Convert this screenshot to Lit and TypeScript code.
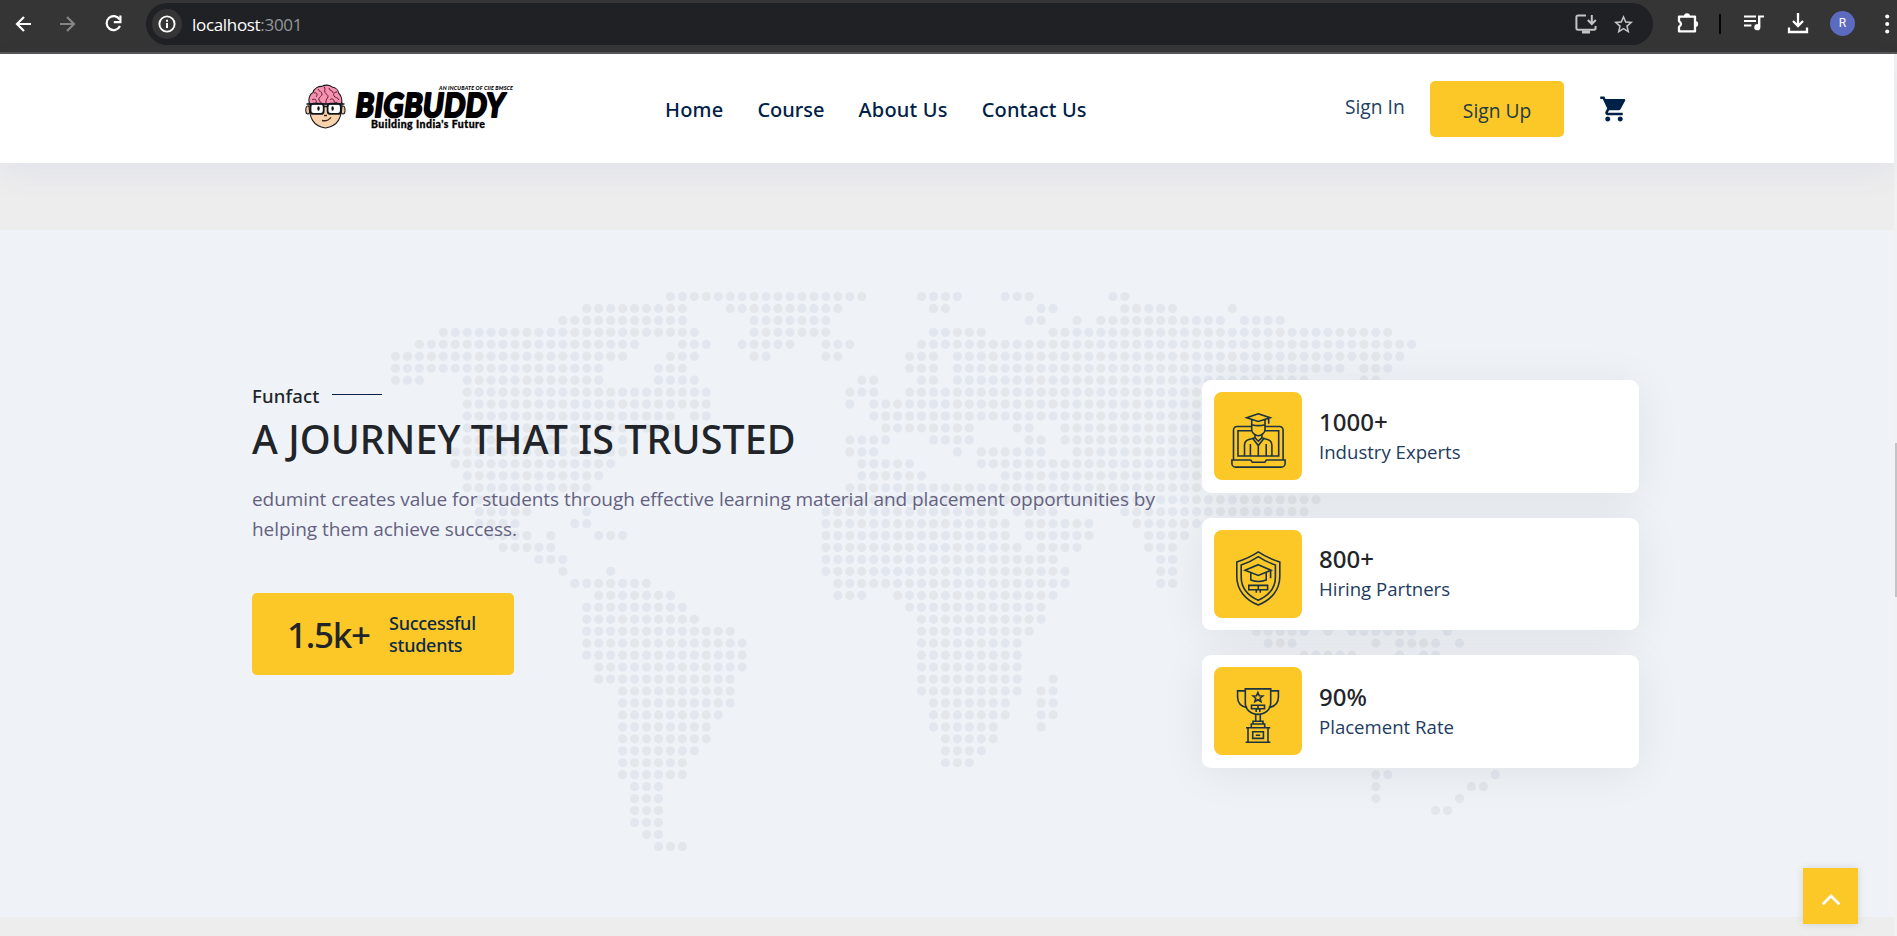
import { LitElement, html, svg, css } from "lit";
import { customElement } from "lit/decorators.js";

/* Column ranges of land dots, one entry per map row. */
const MAP_ROWS: string[] = [
  "23-39 44-47 51-53 60-61",
  "16-24 28-37 45-46 54-55 61-65 70",
  "14-24 30-36 53-54 57 59-69 71-74",
  "4-25 30-36 45-49 55-83",
  "2-20 24-26 29-33 36-38 44-85",
  "0-19 23-25 30-31 36-37 43-45 47-84",
  "0-17 22-24 43-45 47-79 81-83",
  "0-2 6-17 22-25 39-40 44-45 47-76 81-82",
  "6-26 38-40 43-76",
  "6-26 38 40-76",
  "6-23 25-26 40-76",
  "6-23 41-48 52-53 56-76",
  "6-16 19 38-41 45-48 53-54 56-76",
  "5-19 38-40 47 49-54 57-76",
  "5-18 39-43 49-77",
  "6-17 39-44 51-77",
  "6-16 38-77",
  "7-10 37-77",
  "7-11 16 36-50 52-55 61-76",
  "7-10 15-16 36-51 53-58 62-74",
  "8-11 13 17-19 36-51 53-58 63-66",
  "9-13 36-52 54-57 63-65",
  "12-14 36-55 64-65",
  "14 18 36-56 64-65",
  "15-21 37-56 64-65",
  "17-23 37-39 42-55",
  "16-24 43-54",
  "16-25 44-54",
  "16-28 44-53 72-76 78 80-85 88",
  "16-29 44-52 73-75 82 84-87 89",
  "16-29 44-52 76-80 84 86-87",
  "17-29 44-52",
  "17-28 44-52 55",
  "19-28 44-52 54-55",
  "19-28 45-51 54-55",
  "19-27 45-51 54-55",
  "19-26 45-50 54",
  "19-26 46-50",
  "19-25 46-49",
  "19-24 46-48 75-76 81-85",
  "19-24 82-83 92",
  "20-22 82 90-91",
  "20-22 82 89",
  "20-22 87-88",
  "20-22",
  "21-22",
  "22-24",
];
const PITCH = 11.955;

@customElement("dot-map")
export class DotMap extends LitElement {
  static styles = css`
    :host { display: block; }
    svg { display: block; }
    .a { fill: #e2e6ef; }
    .b { fill: #e3e7eb; }
  `;
  render() {
    const dots = MAP_ROWS.flatMap((row, r) =>
      row.split(" ").flatMap((range) => {
        const [from, to = from] = range.split("-").map(Number);
        return Array.from({ length: to - from + 1 }, (_, i) => {
          const c = from + i;
          const tone = (r * 7 + c * 5 + ((r * c) % 5)) % 9 < 4 ? "a" : "b";
          return svg`<circle class=${tone} cx=${(5.5 + c * PITCH).toFixed(2)} cy=${(5.5 + r * PITCH).toFixed(2)} r="4.6"/>`;
        });
      })
    );
    return html`<svg width="1120" height="562" aria-hidden="true">${dots}</svg>`;
  }
}

@customElement("browser-bar")
export class BrowserBar extends LitElement {
  static styles = css`
    :host { display: flex; align-items: flex-start; height: 52px; background: #353535; border-bottom: 2px solid #565656; }
    svg { display: block; flex: none; }
    .back { margin: 14px 0 0 13px; }
    .fwd { margin: 14px 0 0 24px; }
    .reload { margin: 13px 0 0 25px; }
    .omni { display: flex; align-items: center; width: 1507px; height: 42px; margin: 3px 0 0 22px; border-radius: 21px; background: #202124; }
    .info { display: grid; place-items: center; width: 30px; height: 30px; margin-left: 6px; border-radius: 50%; background: #353535; }
    .url { margin-left: 10px; padding-top: 2px; font: 400 17px/24px "Open Sans", sans-serif; letter-spacing: -0.32px; color: #fff; }
    .url span { color: #93979b; }
    .install { margin: 0 14px 0 auto; }
    .star { margin-right: 18px; }
    .ext { margin: 12px 0 0 23px; }
    .sep { width: 2px; height: 20px; margin: 14px 0 0 20px; background: #050505; }
    .music { margin: 12px 0 0 22px; }
    .dl { margin: 12px 0 0 22px; }
    .avatar { width: 25px; height: 25px; margin: 11px 0 0 21px; border-radius: 50%; background: #5c6bc0; color: #fff; text-align: center; font: 12px/25px Roboto, sans-serif; }
    .dots { margin: 14px 0 0 30px; }
  `;
  render() {
    return html`
      <svg class="back" width="20" height="20" viewBox="0 0 20 20" fill="none" stroke="#fff" stroke-width="2.2"><path d="M18 10H4M11 3l-7 7 7 7"/></svg>
      <svg class="fwd" width="20" height="20" viewBox="0 0 20 20" fill="none" stroke="#858585" stroke-width="2.2"><path d="M3 10h14M10 3l7 7-7 7"/></svg>
      <svg class="reload" width="22" height="22" viewBox="0 0 22 22" fill="none" stroke="#fff" stroke-width="2.2"><path d="M17.600 6.400A7 7 0 1 0 18 13"/><path d="M18.400 2.600v6.600h-6.600"/></svg>
      <div class="omni">
        <div class="info">
          <svg width="18" height="18" viewBox="0 0 18 18"><circle cx="9" cy="9" r="7.6" fill="none" stroke="#fff" stroke-width="1.9"/><path d="M8 8h2v5H8zM8 4.800h2v2H8z" fill="#fff"/></svg>
        </div>
        <div class="url">localhost<span>:3001</span></div>
        <svg class="install" width="24" height="22" viewBox="0 0 24 22" fill="none" stroke="#c4c4c4" stroke-width="2"><path d="M12 2.500H4a1.600 1.600 0 0 0-1.600 1.600v11A1.600 1.600 0 0 0 4 16.700h16a1.600 1.600 0 0 0 1.600-1.600V13"/><path d="M8 17.500h8v3H8z" fill="#c4c4c4" stroke="none"/><path d="M17.800 2v8.200M13.800 7l4 4 4-4"/></svg>
        <svg class="star" width="23" height="23" viewBox="0 0 24 24" fill="#c4c4c4"><path d="M22 9.240l-7.190-.62L12 2 9.190 8.630 2 9.240l5.460 4.730L5.820 21 12 17.270 18.180 21l-1.630-7.030L22 9.240zM12 15.400l-3.760 2.270 1-4.280-3.320-2.880 4.380-.38L12 6.100l1.710 4.040 4.380.38-3.320 2.880 1 4.280L12 15.400z"/></svg>
      </div>
      <svg class="ext" width="23" height="23" viewBox="0 0 23 23"><path d="M3 4.600h16v14.800H3v-4.600a3 3 0 0 0 0-5.600z" fill="none" stroke="#fff" stroke-width="2.3" stroke-linejoin="round"/><path d="M8 4.200a3 3 0 0 1 6 0zM19.200 9a3 3 0 0 1 0 6z" fill="#fff"/></svg>
      <div class="sep"></div>
      <svg class="music" width="22" height="22" viewBox="0 0 22 22" fill="#fff"><path d="M1 3.400h12v2.100H1zM1 7.900h12V10H1zM1 12.400h7.400v2.100H1z"/><path d="M15 3.400h6v2.200h-3.600v9.600a3.100 3.100 0 1 1-2.400-3z"/></svg>
      <svg class="dl" width="22" height="22" viewBox="0 0 22 22" fill="none" stroke="#fff" stroke-width="2.3"><path d="M11 1v12.600M6 9l5 5 5-5M2 15.400V20h18v-4.600"/></svg>
      <div class="avatar">R</div>
      <svg class="dots" width="6" height="20" viewBox="0 0 6 20" fill="#fff"><circle cx="2.2" cy="2.6" r="2"/><circle cx="2.2" cy="10" r="2"/><circle cx="2.2" cy="17.4" r="2"/></svg>
    `;
  }
}

@customElement("brand-logo")
export class BrandLogo extends LitElement {
  static styles = css`
    :host { display: block; }
    svg { display: block; overflow: visible; }
    .name { font: 900 33px Lato, sans-serif; }
    .tag { font: italic 900 5.4px Lato, sans-serif; }
    .motto { font: 900 10.5px Lato, sans-serif; }
  `;
  render() {
    return html`<svg width="212" height="50" viewBox="0 0 212 50">
      <g stroke="#1c1c20" stroke-width="1.1">
        <ellipse cx="2.8" cy="26" rx="2" ry="4" fill="#f3c79b"/><ellipse cx="38" cy="26" rx="2" ry="4" fill="#f3c79b"/>
        <path d="M4 19C4 34 8 42 20.400 44 33 42 37 34 37 19z" fill="#f9d3ab"/>
        <path d="M4.500 20C2.600 15 5 10 8 8.500 9 4 14 2 17 2.400 20 .4 25 .8 27 3c4 .6 6.400 3.500 6.600 6C36.800 12 37.600 17 36.200 20z" fill="#f592b0"/>
        <path d="M9 9c3-1 4 2 2 4M7 16c3-2 5 0 4 3M13 5c1 3 4 2 4 5s-4 3-3 6 3 2 3 4M19 2.500c2 2 0 4 1 6s3 2 3 4-3 3-2 7M24 4c0 3 4 2 4 5M32 8c-3 0-4 2-3 4s4 1 5 4M25 16c1-2 4-1 4 1s2 2 3 1" fill="none" stroke="#5e1a35" stroke-width="1"/>
      </g>
      <rect x="5.500" y="19.700" width="13.200" height="10.200" rx="3" fill="#fff" stroke="#12161f" stroke-width="1.800"/>
      <rect x="22.600" y="19.700" width="13.200" height="10.200" rx="3" fill="#fff" stroke="#12161f" stroke-width="1.800"/>
      <path d="M1.500 20h38M19 22.500h3.500" stroke="#12161f" stroke-width="1.700"/>
      <ellipse cx="13.500" cy="24.500" rx="1.200" ry="2.300" fill="#111"/><ellipse cx="27.600" cy="24.500" rx="1.200" ry="2.300" fill="#111"/>
      <path d="M17 36.500c4 .8 7-.6 9-3.200M19 31.500h3" fill="none" stroke="#3b2418" stroke-width="1.300"/>
      <text class="name" transform="translate(49.500 33) skewX(-7) scale(.84 1)" textLength="177" stroke="#000" stroke-width="2.200" stroke-linejoin="round">BIGBUDDY</text>
      <text class="tag" x="134" y="5.600" textLength="74">AN INCUBATE OF CIIE BMSCE</text>
      <text class="motto" x="66" y="44" textLength="114" stroke="#000" stroke-width=".3">Building India's Future</text>
    </svg>`;
  }
}

const ICONS = {
  expert: svg`
    <path d="M20.500 13.500H6a3.500 3.500 0 0 0-3.500 3.500v30M34 13.500h14.600a3.500 3.500 0 0 1 3.500 3.500v30"/>
    <path d="M20.500 17.700H7V43h40.700V17.700H34"/>
    <path d="M.9 47h18.800l1.600 2.200h12.500L35.400 47h18.700v3.400a3.700 3.700 0 0 1-3.700 3.700H4.600A3.700 3.700 0 0 1 .9 50.400z"/>
    <path d="M27.300.8 39 4.700 27.300 8.400 15.700 4.700zM37.700 5v5.800M20.700 6.500V17c0 2.800 3.600 5.700 6.600 5.700S34 19.800 34 17V6.500M20.700 11.700q6.600 1.800 13.300 0"/>
    <path d="M24 21.500v3.300l3.300 3.400 3.600-3.400v-3.300M24 24.800l-2.200.6 5.500 7.200 5.600-7.200-2-.6M27.300 32.600V43M21.800 25.400l-4 1.200a6 6 0 0 0-4.300 5.600V43M32.900 25.400l3.700 1.200a6 6 0 0 1 4.300 5.600V43M19.400 31v12M35.200 31v12"/>`,
  partner: svg`
    <path d="M27.300.9C34 5.500 41 8.500 48.800 11v14.500C48.800 39 40 49 27.300 54 14.600 49 5.800 39 5.800 25.500V11C13.600 8.500 20.600 5.500 27.300.9z"/>
    <path d="M27.300 5.600C33 9.500 38.500 12 44.400 14v12c0 10.500-6.600 18.600-17.100 23.300C16.800 44.600 10.200 36.500 10.200 26V14C16.100 12 21.600 9.500 27.300 5.600z"/>
    <path d="M27.300 13.700 40 19.200l-12.700 5.200-13.300-5.200zM39.600 19.400v7.800M19.800 22v7q7.500 3 15.400 0v-7"/>
    <path d="M17.800 34.400h18.800v4.300H17.800zM27.300 34.400v4M25.300 41.800v-3h4v3"/>`,
  rate: svg`
    <path d="M14.300.9h25.400V15c0 6.500-5.600 11.400-12.700 11.400S14.300 21.500 14.300 15z"/>
    <path d="M14.300 2.900H6.600V9c0 5.500 3.600 9.600 9.600 10.600M39.700 2.900h7.700V9c0 5.500-3.600 9.600-9.600 10.600"/>
    <path d="m26.900 4.500 1.400 3.200 3.500.3-2.700 2.200.8 3.300-3-1.800-3 1.800.8-3.300L22 8l3.500-.3z"/>
    <path d="M20.500 17.300h13v3.500h-13zM27 17.300v3.500M25.200 24v-3h3.600v3"/>
    <path d="M24.700 26.300V33M29.300 26.300V33M22 36v-2.800h10V36M20.300 39v-3h13.400v3M15 39.700h24.200M17 40v14M37 40v14M14.600 54.300h24.800M21.700 43.800h10.700v6.600H21.700zM24.800 47.200h4.400"/>`,
};

const STATS = [
  { icon: ICONS.expert, value: "1000+", label: "Industry Experts" },
  { icon: ICONS.partner, value: "800+", label: "Hiring Partners" },
  { icon: ICONS.rate, value: "90%", label: "Placement Rate" },
];

@customElement("app-root")
export class AppRoot extends LitElement {
  static styles = css`
    :host { display: block; height: 936px; overflow: hidden; background: #ededed; font-family: "Open Sans", sans-serif; color: #002147; }
    .body { display: flex; height: 882px; }
    .page { width: 1894px; flex: none; }
    .scroll { width: 3px; padding-top: 389px; background: #f1f1f1; box-sizing: border-box; }
    .thumb { height: 154px; margin-left: 1px; background: #c4c4c4; }
    header { position: relative; display: flex; align-items: center; height: 109px; box-sizing: border-box; padding-left: 305px; background: #fff; box-shadow: 0 10px 30px rgba(80, 95, 210, 0.07); }
    brand-logo { width: 212px; }
    nav { display: flex; gap: 34px; margin-left: 148px; width: 680px; padding-top: 2px; font: 500 20px/30px "Noto Sans", sans-serif; white-space: nowrap; }
    .wide { letter-spacing: 0.2px; }
    .mid { letter-spacing: 0.12px; }
    .signin { width: 85px; padding-bottom: 3px; font-size: 19.2px; line-height: 30px; color: #223f61; }
    .signup { width: 134px; height: 56px; box-sizing: border-box; padding-top: 3px; border-radius: 5px; background: #fbc828; text-align: center; font-size: 19.2px; line-height: 54px; color: #1e3a44; }
    .cart { margin-left: 35px; }
    .fact { display: grid; height: 687px; margin-top: 67px; background: #eff3f8; }
    dot-map { grid-area: 1 / 1; margin: 61px 0 0 390px; }
    .row { grid-area: 1 / 1; display: flex; padding-left: 252px; }
    .intro { width: 950px; padding-top: 154.5px; }
    .eyebrow { display: flex; align-items: center; gap: 13px; height: 22px; font: 500 18.5px/22px "Noto Sans", sans-serif; letter-spacing: 0.16px; color: #212529; }
    .rule { width: 50px; height: 1px; margin-bottom: 2px; background: #002147; }
    h2 { margin: 8.500px 0 20.500px; font: 500 39.4px/48px "Noto Sans", sans-serif; letter-spacing: 0.08px; color: #212529; white-space: nowrap; }
    p { margin: 0; width: 920px; font-size: 19px; line-height: 30px; letter-spacing: -0.06px; color: #646180; }
    .badge { display: flex; align-items: center; width: 262px; height: 82px; box-sizing: border-box; margin-top: 49.3px; padding-left: 35px; border-radius: 5px; background: #fbc828; font-family: "Noto Sans", sans-serif; font-weight: 500; }
    .big { width: 102px; padding-top: 2px; font-size: 35px; letter-spacing: -1.3px; color: #212529; }
    .small { font-size: 18px; line-height: 22px; letter-spacing: -0.25px; color: #0b2a45; }
    .cards { display: flex; flex-direction: column; gap: 25px; padding-top: 150px; }
    .card { display: flex; align-items: center; width: 437px; height: 112.500px; box-sizing: border-box; padding-left: 12px; border-radius: 9px; background: #fff; box-shadow: 0 5px 45px rgba(0, 0, 0, 0.07); }
    .tile { display: grid; justify-content: center; align-content: start; width: 88px; height: 88px; box-sizing: border-box; padding-top: 21px; border-radius: 8px; background: #fbc828; }
    .tile svg { display: block; fill: none; stroke: #1d3440; stroke-width: 1.6; }
    .stat { margin-left: 17px; white-space: nowrap; }
    .value { font: 500 24px/30px "Noto Sans", sans-serif; color: #212529; }
    .label { margin-top: 1px; font-size: 18.6px; line-height: 28px; color: #1d3c60; }
    .top { position: absolute; left: 1803px; top: 868px; display: grid; place-items: center; width: 55px; height: 56px; padding-top: 0; background: #fbc828; box-shadow: 0 0 8px rgba(0, 0, 0, 0.12); }
    .top svg { margin-top: 5px; }
  `;
  render() {
    return html`
      <browser-bar></browser-bar>
      <div class="body">
        <div class="page">
          <header>
            <brand-logo></brand-logo>
            <nav><span class="wide">Home</span><span>Course</span><span class="wide">About Us</span><span class="mid">Contact Us</span></nav>
            <div class="signin">Sign In</div>
            <div class="signup">Sign Up</div>
            <svg class="cart" width="30" height="30" viewBox="0 0 24 24" fill="#002147"><path d="M7 18c-1.100 0-1.990.9-1.990 2S5.900 22 7 22s2-.9 2-2-.9-2-2-2zM1 2v2h2l3.600 7.590-1.350 2.450c-.16.28-.25.61-.25.96 0 1.100.9 2 2 2h12v-2H7.420c-.14 0-.25-.11-.25-.25l.03-.12.9-1.630h7.450c.75 0 1.410-.41 1.750-1.030l3.580-6.490c.08-.14.12-.31.12-.48 0-.55-.45-1-1-1H5.210l-.94-2H1zm16 16c-1.100 0-1.990.9-1.990 2s.89 2 1.990 2 2-.9 2-2-.9-2-2-2z"/></svg>
          </header>
          <section class="fact">
            <dot-map></dot-map>
            <div class="row">
              <div class="intro">
                <div class="eyebrow">Funfact<span class="rule"></span></div>
                <h2>A JOURNEY THAT IS TRUSTED</h2>
                <p>edumint creates value for students through effective learning material and placement opportunities by helping them achieve success.</p>
                <div class="badge"><div class="big">1.5k+</div><div class="small">Successful<br>students</div></div>
              </div>
              <div class="cards">
                ${STATS.map((s) => html`
                  <div class="card">
                    <div class="tile"><svg width="55" height="55" viewBox="0 0 55 55">${s.icon}</svg></div>
                    <div class="stat"><div class="value">${s.value}</div><div class="label">${s.label}</div></div>
                  </div>`)}
              </div>
            </div>
          </section>
        </div>
        <div class="scroll"><div class="thumb"></div></div>
      </div>
      <div class="top"><svg width="20" height="14" viewBox="0 0 20 14" fill="none" stroke="#fff" stroke-width="2.8" stroke-linecap="round"><path d="M2.500 11.500 10 4l7.500 7.500"/></svg></div>
    `;
  }
}
